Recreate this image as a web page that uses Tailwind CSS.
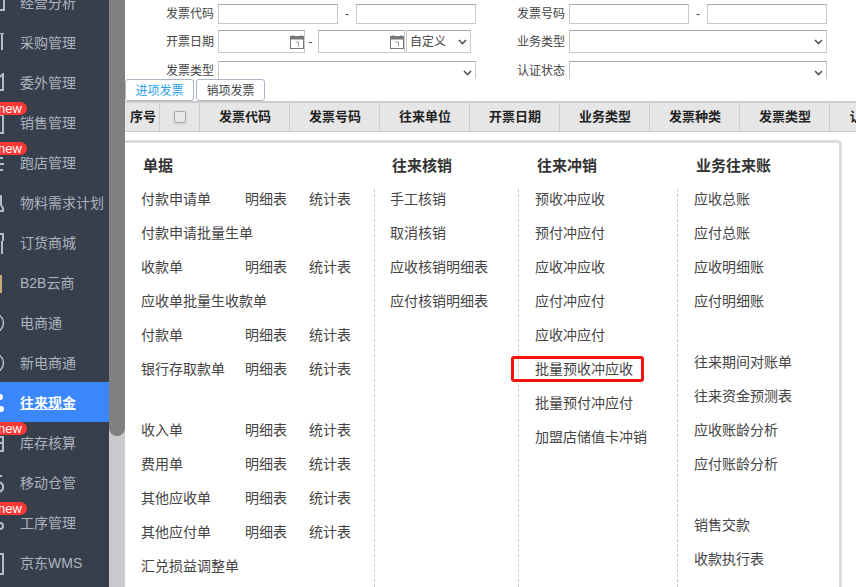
<!DOCTYPE html>
<html lang="en">
<head>
    <meta charset="UTF-8" />
    <title>往来现金</title>
    <script src="https://cdn.jsdelivr.net/npm/@tailwindcss/browser@4"></script>
</head>
<body class="bg-white h-screen overflow-hidden flex font-['Liberation_Sans','Noto_Sans_CJK_SC',sans-serif] text-[#444]">
    <!-- Sidebar, scrolled so the first item is cut by the top edge -->
    <aside class="w-[109px] h-[620px] bg-[#373f4d] shrink-0 -mt-[18px] text-[14px] text-[#adb4bd]">
        <div class="relative h-10 flex items-center pl-5 pt-[2px]">经营分析<svg class="absolute left-0 top-[11px]" width="6" height="20" fill="none" stroke="#b5bcc5" stroke-width="2"><path d="M0 3h4v14H0"/></svg></div>
        <div class="relative h-10 flex items-center pl-5 pt-[2px]">采购管理<svg class="absolute left-0 top-[11px]" width="6" height="20" fill="none" stroke="#b5bcc5" stroke-width="2"><path d="M0 0h4M2 0v17"/></svg></div>
        <div class="relative h-10 flex items-center pl-5 pt-[2px]">委外管理<svg class="absolute left-0 top-[11px]" width="6" height="20" fill="none" stroke="#b5bcc5" stroke-width="2"><path d="M0 4l3-3v6M3 6v11H0"/></svg></div>
        <div class="relative h-10 flex items-center pl-5 pt-[2px]">销售管理<svg class="absolute left-0 top-[11px]" width="6" height="22" fill="none" stroke="#b5bcc5" stroke-width="2"><path d="M0 2h3v18H0"/></svg><span class="absolute -left-[6px] top-0 bg-[#fb3636] text-white text-[13px] leading-[13px] pl-[4px] pr-[5px] rounded-[7px]">new</span></div>
        <div class="relative h-10 flex items-center pl-5 pt-[2px]">跑店管理<svg class="absolute left-0 top-[11px]" width="6" height="22" fill="none" stroke="#b5bcc5" stroke-width="2"><path d="M0 5h3M0 11h4M0 17h3"/></svg><span class="absolute -left-[6px] top-0 bg-[#fb3636] text-white text-[13px] leading-[13px] pl-[4px] pr-[5px] rounded-[7px]">new</span></div>
        <div class="relative h-10 flex items-center pl-5 pt-[2px] whitespace-nowrap">物料需求计划<svg class="absolute left-0 top-[11px]" width="6" height="20" fill="none" stroke="#b5bcc5" stroke-width="2"><path d="M1 2v10l2 3v3H0"/></svg></div>
        <div class="relative h-10 flex items-center pl-5 pt-[2px]">订货商城<svg class="absolute left-0 top-[11px]" width="6" height="22" fill="none" stroke="#b5bcc5" stroke-width="2"><path d="M0 1h3v7M2 8v13"/></svg></div>
        <div class="relative h-10 flex items-center pl-5 pt-[2px]">B2B云商<svg class="absolute left-0 top-[11px]" width="6" height="20" fill="none" stroke="#c9a878" stroke-width="2"><path d="M1 2v18"/></svg></div>
        <div class="relative h-10 flex items-center pl-5 pt-[2px]">电商通<svg class="absolute left-0 top-[11px]" width="6" height="20" fill="none" stroke="#b5bcc5" stroke-width="1.5"><circle cx="-6" cy="10" r="9.5"/></svg></div>
        <div class="relative h-10 flex items-center pl-5 pt-[2px]">新电商通<svg class="absolute left-0 top-[11px]" width="6" height="20" fill="none" stroke="#b5bcc5" stroke-width="1.5"><circle cx="-6" cy="10" r="9.5"/></svg></div>
        <div class="relative h-10 flex items-center pl-5 pt-[2px] bg-[#3a87fe] text-white font-bold underline">往来现金<svg class="absolute left-0 top-[11px]" width="6" height="20" fill="#fff"><circle cx="0" cy="4" r="3"/><circle cx="1" cy="16" r="3"/></svg></div>
        <div class="relative h-10 flex items-center pl-5 pt-[2px]">库存核算<svg class="absolute left-0 top-[11px]" width="6" height="22" fill="none" stroke="#b5bcc5" stroke-width="2"><path d="M0 4h3v14H0M0 10h3"/></svg><span class="absolute -left-[6px] top-0 bg-[#fb3636] text-white text-[13px] leading-[13px] pl-[4px] pr-[5px] rounded-[7px]">new</span></div>
        <div class="relative h-10 flex items-center pl-5 pt-[2px]">移动仓管<svg class="absolute left-0 top-[11px]" width="6" height="22" fill="none" stroke="#b5bcc5" stroke-width="2"><path d="M0 3h2M0 9l3 3v4l-3 3"/></svg></div>
        <div class="relative h-10 flex items-center pl-5 pt-[2px]">工序管理<svg class="absolute left-0 top-[11px]" width="6" height="22" fill="none" stroke="#b5bcc5" stroke-width="2"><circle cx="0" cy="13" r="3"/></svg><span class="absolute -left-[6px] top-0 bg-[#fb3636] text-white text-[13px] leading-[13px] pl-[4px] pr-[5px] rounded-[7px]">new</span></div>
        <div class="relative h-10 flex items-center pl-5 pt-[2px]">京东WMS<svg class="absolute left-0 top-[11px]" width="6" height="24" fill="none" stroke="#b5bcc5" stroke-width="2"><path d="M0 1h3v20H0"/></svg></div>
    </aside>

    <!-- Scrollbar -->
    <div class="w-4 h-[587px] bg-[#c8cacd] shrink-0">
        <div class="h-[436px] bg-[#808080] rounded-b-lg"></div>
    </div>

    <main class="flex-1 min-w-0 flex flex-col overflow-hidden">
        <!-- Filter form, cut off by the tabs -->
        <section class="h-[79px] shrink-0 overflow-hidden text-[12px] pt-1">
            <div class="flex h-5 items-center">
                <span class="w-[93px] shrink-0 pr-[4px] text-right">发票代码</span>
                <input class="w-[120px] shrink-0 h-5 border border-[#c8c8c8] border-t-[#a8a8a8]" />
                <span class="w-[18px] shrink-0 text-center">-</span>
                <input class="w-[120px] shrink-0 h-5 border border-[#c8c8c8] border-t-[#a8a8a8]" />
                <span class="w-[93px] shrink-0 pr-[4px] text-right">发票号码</span>
                <input class="w-[120px] shrink-0 h-5 border border-[#c8c8c8] border-t-[#a8a8a8]" />
                <span class="w-[18px] shrink-0 text-center">-</span>
                <input class="w-[120px] shrink-0 h-5 border border-[#c8c8c8] border-t-[#a8a8a8]" />
            </div>
            <div class="flex h-[23px] items-center mt-[6px]">
                <span class="w-[93px] shrink-0 pr-[4px] text-right">开票日期</span>
                <div class="relative w-[87px] h-[23px] shrink-0 border border-[#c8c8c8] border-t-[#a8a8a8]">
                    <svg class="absolute right-0 top-[4px]" width="14" height="14"><rect x="0.5" y="1.5" width="13" height="12" fill="#fff" stroke="#777"/><rect x="0" y="1" width="14" height="3.5" fill="#777"/><path d="M3 0v3M11 0v3" stroke="#777"/><path d="M5.5 7h3v4.5" fill="none" stroke="#999"/></svg>
                </div>
                <span class="w-[13px] shrink-0 pr-[2px] text-center">-</span>
                <div class="relative w-[87px] h-[23px] shrink-0 border border-[#c8c8c8] border-t-[#a8a8a8]">
                    <svg class="absolute right-0 top-[4px]" width="14" height="14"><rect x="0.5" y="1.5" width="13" height="12" fill="#fff" stroke="#777"/><rect x="0" y="1" width="14" height="3.5" fill="#777"/><path d="M3 0v3M11 0v3" stroke="#777"/><path d="M5.5 7h3v4.5" fill="none" stroke="#999"/></svg>
                </div>
                <div class="relative ml-px mr-[5px] w-[65px] h-[23px] shrink-0 flex items-center pl-[3px] border border-[#c8c8c8] border-t-[#a8a8a8]">自定义
                    <svg class="absolute right-[3px] top-[8px]" width="9" height="6" fill="none" stroke="#555" stroke-width="1.6"><path d="M1 1l3.5 3.5L8 1"/></svg>
                </div>
                <span class="w-[93px] shrink-0 pr-[4px] text-right">业务类型</span>
                <div class="relative w-[258px] h-[23px] shrink-0 border border-[#c8c8c8] border-t-[#a8a8a8]">
                    <svg class="absolute right-[3px] top-[8px]" width="9" height="6" fill="none" stroke="#555" stroke-width="1.6"><path d="M1 1l3.5 3.5L8 1"/></svg>
                </div>
            </div>
            <div class="flex h-6 items-start mt-2">
                <span class="w-[93px] shrink-0 pr-[4px] text-right leading-5">发票类型</span>
                <div class="relative w-[258px] h-6 shrink-0 border border-[#c8c8c8] border-t-[#a8a8a8]">
                    <svg class="absolute right-[3px] top-[8px]" width="9" height="6" fill="none" stroke="#555" stroke-width="1.6"><path d="M1 1l3.5 3.5L8 1"/></svg>
                </div>
                <span class="w-[93px] shrink-0 pr-[4px] text-right leading-5">认证状态</span>
                <div class="relative w-[258px] h-6 shrink-0 border border-[#c8c8c8] border-t-[#a8a8a8]">
                    <svg class="absolute right-[3px] top-[8px]" width="9" height="6" fill="none" stroke="#555" stroke-width="1.6"><path d="M1 1l3.5 3.5L8 1"/></svg>
                </div>
            </div>
        </section>

        <!-- Tabs -->
        <div class="flex h-[22px] shrink-0 text-[12px] gap-[2px]">
            <div class="w-[69px] pt-px border border-[#a9b4c4] rounded-[3px] text-[#2a9fe8] flex items-center justify-center">进项发票</div>
            <div class="w-[69px] pt-px border border-[#a9b4c4] rounded-[3px] flex items-center justify-center">销项发票</div>
        </div>

        <!-- Grid header -->
        <div class="flex h-[31px] shrink-0 border-t-2 border-b border-[#ccc] bg-[#e6e6e6] text-[13px] font-bold text-[#222] whitespace-nowrap">
            <div class="w-[35px] shrink-0 pl-[2px] border-r border-[#ccc] flex items-center justify-center">序号</div>
            <div class="w-10 shrink-0 border-r border-[#ccc] flex items-center justify-center"><span class="w-3 h-3 rounded-[2px] border border-[#aaa] bg-[#e8e8e8] shadow-sm"></span></div>
            <div class="w-[90px] shrink-0 pl-px border-r border-[#ccc] flex items-center justify-center">发票代码</div>
            <div class="w-[90px] shrink-0 pl-px border-r border-[#ccc] flex items-center justify-center">发票号码</div>
            <div class="w-[90px] shrink-0 pl-px border-r border-[#ccc] flex items-center justify-center">往来单位</div>
            <div class="w-[90px] shrink-0 pl-px border-r border-[#ccc] flex items-center justify-center">开票日期</div>
            <div class="w-[90px] shrink-0 pl-px border-r border-[#ccc] flex items-center justify-center">业务类型</div>
            <div class="w-[90px] shrink-0 pl-px border-r border-[#ccc] flex items-center justify-center">发票种类</div>
            <div class="w-[90px] shrink-0 pl-px border-r border-[#ccc] flex items-center justify-center">发票类型</div>
            <div class="w-[90px] shrink-0 pl-px flex items-center justify-center">认证状态</div>
        </div>

        <!-- Menu panel -->
        <section class="mt-2 w-[717px] flex-1 flex border-t-[3px] border-r-[3px] border-[#dcdcdc] rounded-tr-[5px] text-[14px] leading-5">
            <div class="w-[249px] shrink-0 pt-[13px] pl-4 flex flex-col">
                <h3 class="h-5 ml-[2px] text-[15px] font-bold text-[#333]">单据</h3>
                <ul class="mt-[13px] flex flex-col gap-[14px]">
                    <li class="flex h-5"><span class="w-[104px]">付款申请单</span><span class="w-16">明细表</span><span>统计表</span></li>
                    <li class="h-5 whitespace-nowrap">付款申请批量生单</li>
                    <li class="flex h-5"><span class="w-[104px]">收款单</span><span class="w-16">明细表</span><span>统计表</span></li>
                    <li class="h-5 whitespace-nowrap">应收单批量生收款单</li>
                    <li class="flex h-5"><span class="w-[104px]">付款单</span><span class="w-16">明细表</span><span>统计表</span></li>
                    <li class="flex h-5"><span class="w-[104px]">银行存取款单</span><span class="w-16">明细表</span><span>统计表</span></li>
                    <li class="h-[13px]"></li>
                    <li class="flex h-5"><span class="w-[104px]">收入单</span><span class="w-16">明细表</span><span>统计表</span></li>
                    <li class="flex h-5"><span class="w-[104px]">费用单</span><span class="w-16">明细表</span><span>统计表</span></li>
                    <li class="flex h-5"><span class="w-[104px]">其他应收单</span><span class="w-16">明细表</span><span>统计表</span></li>
                    <li class="flex h-5"><span class="w-[104px]">其他应付单</span><span class="w-16">明细表</span><span>统计表</span></li>
                    <li class="h-5 whitespace-nowrap">汇兑损益调整单</li>
                </ul>
            </div>
            <div class="w-36 shrink-0 pt-[13px] flex flex-col">
                <h3 class="h-5 pl-[18px] text-[15px] font-bold text-[#333]">往来核销</h3>
                <ul class="mt-[13px] flex-1 flex flex-col gap-[14px] pl-[15px] border-l border-dashed border-[#ccc]">
                    <li class="h-5">手工核销</li>
                    <li class="h-5">取消核销</li>
                    <li class="h-5 whitespace-nowrap">应收核销明细表</li>
                    <li class="h-5 whitespace-nowrap">应付核销明细表</li>
                </ul>
            </div>
            <div class="w-[159px] shrink-0 pt-[13px] flex flex-col">
                <h3 class="h-5 pl-[19px] text-[15px] font-bold text-[#333]">往来冲销</h3>
                <ul class="mt-[13px] flex-1 flex flex-col gap-[14px] pl-4 border-l border-dashed border-[#ccc]">
                    <li class="h-5">预收冲应收</li>
                    <li class="h-5">预付冲应付</li>
                    <li class="h-5">应收冲应收</li>
                    <li class="h-5">应付冲应付</li>
                    <li class="h-5">应收冲应付</li>
                    <li class="h-5 relative whitespace-nowrap">批量预收冲应收<span class="absolute -left-[24px] top-[-3px] w-[133px] h-[26px] border-[3px] border-[#f5110f] rounded-[3px]"></span></li>
                    <li class="h-5 whitespace-nowrap">批量预付冲应付</li>
                    <li class="h-5 whitespace-nowrap">加盟店储值卡冲销</li>
                </ul>
            </div>
            <div class="flex-1 pt-[13px] flex flex-col">
                <h3 class="h-5 pl-[19px] text-[15px] font-bold text-[#333]">业务往来账</h3>
                <ul class="mt-[13px] flex-1 flex flex-col gap-[14px] pl-4 border-l border-dashed border-[#ccc]">
                    <li class="h-5">应收总账</li>
                    <li class="h-5">应付总账</li>
                    <li class="h-5">应收明细账</li>
                    <li class="h-5">应付明细账</li>
                    <li class="h-[13px]"></li>
                    <li class="h-5">往来期间对账单</li>
                    <li class="h-5">往来资金预测表</li>
                    <li class="h-5">应收账龄分析</li>
                    <li class="h-5">应付账龄分析</li>
                    <li class="h-[13px]"></li>
                    <li class="h-5">销售交款</li>
                    <li class="h-5">收款执行表</li>
                </ul>
            </div>
        </section>
    </main>
</body>
</html>
